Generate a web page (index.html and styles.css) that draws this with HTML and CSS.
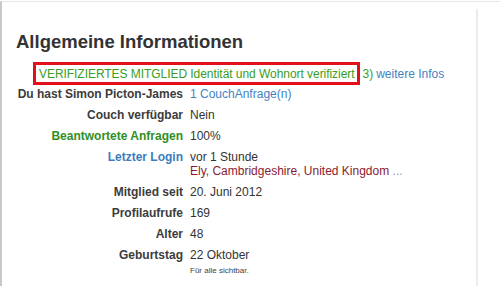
FILE: index.html
```html
<!DOCTYPE html>
<html lang="de">
<head>
  <meta charset="UTF-8" />
  <title>Allgemeine Informationen</title>
  <link rel="stylesheet" href="styles.css">
</head>
<body>

<div class="frame">
  <div class="box">
    <h2 class="title">Allgemeine Informationen</h2>

    <div class="verify-line">
      <span class="verified">VERIFIZIERTES MITGLIED Identität und Wohnort verifiziert</span>
      <span class="green">3)</span>
      <a class="link" href="#">weitere Infos</a>
    </div>

    <div class="info">
      <div class="label">Du hast Simon Picton-James</div>
      <div class="value"><a class="link" href="#">1 CouchAnfrage(n)</a></div>

      <div class="label">Couch verfügbar</div>
      <div class="value">Nein</div>

      <div class="label green">Beantwortete Anfragen</div>
      <div class="value">100%</div>

      <div class="label blue">Letzter Login</div>
      <div class="value">
        vor 1 Stunde<br>
        <span class="place">Ely, Cambridgeshire, United Kingdom</span> <span class="more">...</span>
      </div>

      <div class="label">Mitglied seit</div>
      <div class="value">20. Juni 2012</div>

      <div class="label">Profilaufrufe</div>
      <div class="value">169</div>

      <div class="label">Alter</div>
      <div class="value">48</div>

      <div class="label">Geburtstag</div>
      <div class="value">
        22 Oktober
        <div class="note">Für alle sichtbar.</div>
      </div>
    </div>
  </div>
</div>

</body>
</html>
```

FILE: styles.css
```css
body {
  margin: 0;
  font-family: "Liberation Sans", Arial, sans-serif;
  font-size: 12px;
  color: #333;
  background: #fff;
}
.frame {
  margin-top: 1px;
  height: 285px;
  border-top: 1px solid #e6e6e6;
  border-left: 2px solid #c8c8c8;
  overflow: hidden;
}
.box {
  width: 460px;
  height: 290px;
  margin-top: 7px;
  padding: 22px 0 0 14px;
  border-right: 2px solid #ececec;
}
.title {
  margin: 0;
  font-size: 18.5px;
  line-height: 22px;
  font-weight: bold;
  color: #333;
}
.verify-line {
  display: flex;
  align-items: baseline;
  gap: 3px;
  margin: 9px 0 0 17px;
  line-height: 14px;
}
.verified {
  border: 3px solid #e3101c;
  padding: 2px 2px 1px 3px;
  color: #3a9d23;
  letter-spacing: -0.05px;
}
.green {
  color: #3a9d23;
}
.blue {
  color: #3b7dbf;
}
.link {
  color: #4383c3;
  text-decoration: none;
}
.info {
  display: grid;
  grid-template-columns: 176px 1fr;
  column-gap: 7px;
  row-gap: 7px;
  margin: 2px 0 0 -9px;
  line-height: 14px;
}
.label {
  text-align: right;
  font-weight: bold;
  color: #3c3c3c;
}
.label.green {
  color: #2f8f1f;
}
.label.blue {
  color: #3b7dbf;
}
.value {
  color: #333;
}
.place {
  color: #8a1a32;
}
.more {
  color: #999;
}
.note {
  font-size: 8px;
  line-height: 12px;
  margin-top: 3px;
  color: #444;
}
```
